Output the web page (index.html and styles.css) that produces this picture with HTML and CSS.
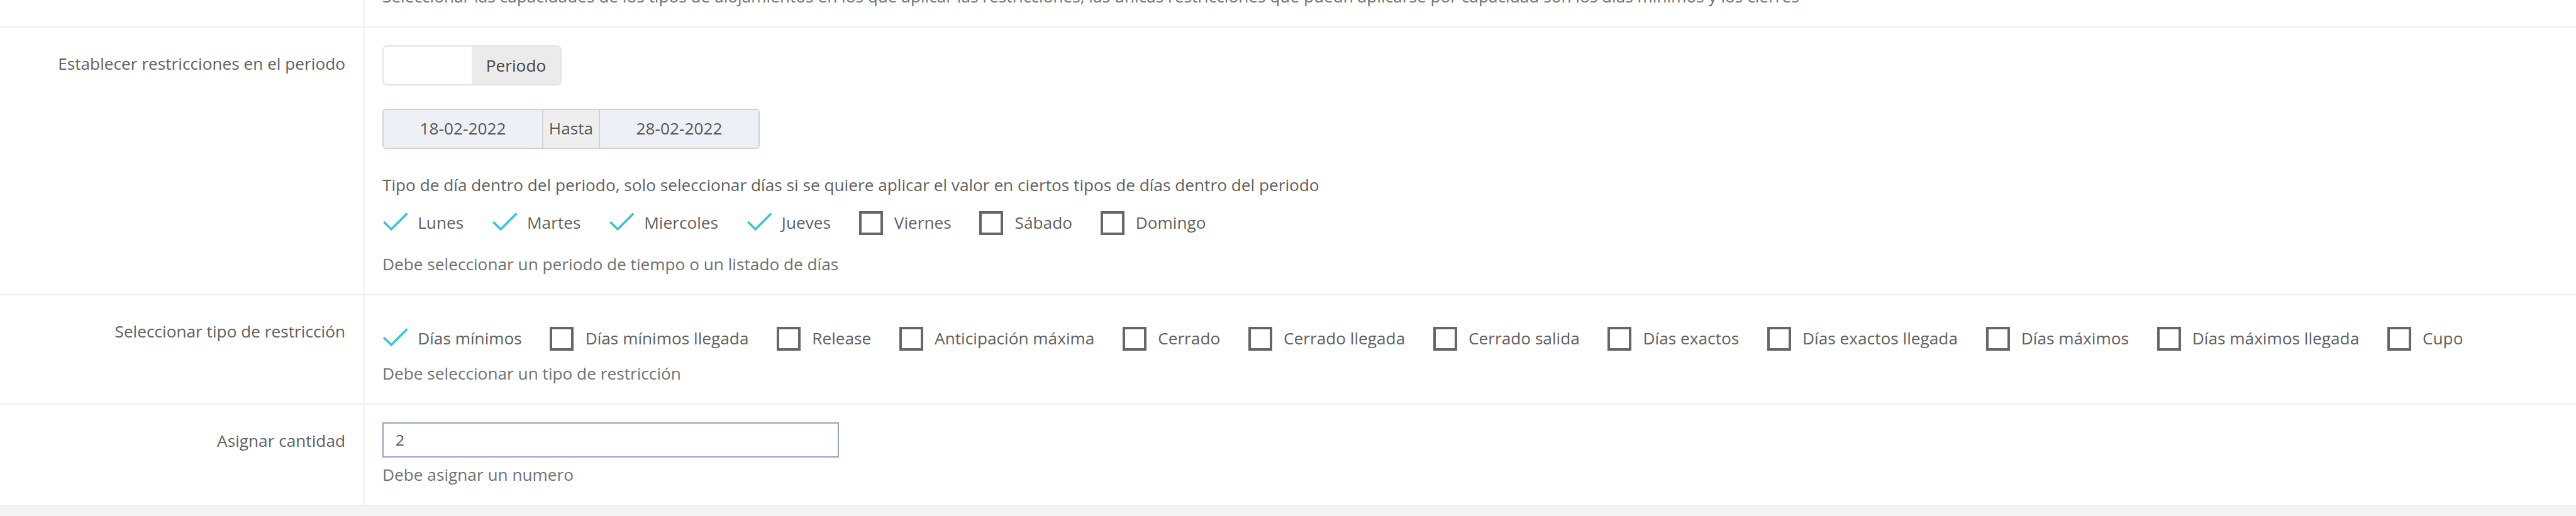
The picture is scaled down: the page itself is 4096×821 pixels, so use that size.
FILE: index.html
```html
<!DOCTYPE html>
<html lang="es">
<head>
    <meta charset="UTF-8">
    <meta name="viewport" content="width=device-width, initial-scale=1.0">
    <title>Restricciones</title>
    <link rel="stylesheet" href="styles.css">
</head>
<body>
    <form class="form-bordered">
        <!-- Capacidades -->
        <div class="form-row row-capacity">
            <div class="control-label"></div>
            <div class="control-body">
                <span class="help-block">Seleccionar las capacidades de los tipos de alojamientos en los que aplicar las restricciones, las únicas restricciones que puedn aplicarse por capacidad son los días mínimos y los cierres</span>
            </div>
        </div>

        <!-- Periodo -->
        <div class="form-row row-period">
            <div class="control-label">Establecer restricciones en el periodo</div>
            <div class="control-body">
                <div class="switch">
                    <span class="switch-handle"></span>
                    <span class="switch-label">Periodo</span>
                </div>
                <div class="date-range">
                    <input type="text" value="18-02-2022">
                    <span class="addon">Hasta</span>
                    <input type="text" value="28-02-2022">
                </div>
                <div class="text-line">Tipo de día dentro del periodo, solo seleccionar días si se quiere aplicar el valor en ciertos tipos de días dentro del periodo</div>
                <div class="checkbox-list" id="daysList"></div>
                <span class="help-block">Debe seleccionar un periodo de tiempo o un listado de días</span>
            </div>
        </div>

        <!-- Tipo de restricción -->
        <div class="form-row row-type">
            <div class="control-label">Seleccionar tipo de restricción</div>
            <div class="control-body">
                <div class="checkbox-list" id="typesList"></div>
                <span class="help-block">Debe seleccionar un tipo de restricción</span>
            </div>
        </div>

        <!-- Cantidad -->
        <div class="form-row row-amount">
            <div class="control-label">Asignar cantidad</div>
            <div class="control-body">
                <input type="text" class="amount" value="2">
                <span class="help-block">Debe asignar un numero</span>
            </div>
        </div>
    </form>

    <script>
        const days = ["Lunes", "Martes", "Miercoles", "Jueves", "Viernes", "Sábado", "Domingo"];
        const types = ["Días mínimos", "Días mínimos llegada", "Release", "Anticipación máxima", "Cerrado", "Cerrado llegada", "Cerrado salida", "Días exactos", "Días exactos llegada", "Días máximos", "Días máximos llegada", "Cupo"];

        function fillList(id, names, checkedCount) {
            document.getElementById(id).innerHTML = names.map((name, index) => {
                const mark = index < checkedCount
                    ? '<svg class="check" viewBox="0 0 42 38"><path d="M2.3 16.9 L14.2 28.8 L39.4 3.5"/></svg>'
                    : '<span class="box"></span>';
                return `<label class="checkbox"><span class="mark">${mark}</span>${name}</label>`;
            }).join("");
        }

        fillList("daysList", days, 4);
        fillList("typesList", types, 1);
    </script>
</body>
</html>
```
FILE: styles.css
```css
* {
    box-sizing: border-box;
}

body {
    font-family: 'Open Sans', sans-serif;
    font-size: 26.23px;
    line-height: 36px;
    background-color: #f4f4f4;
    margin: 0;
    color: #606060;
    height: 821px;
    overflow: hidden;
}

.form-bordered {
    background-color: #fff;
}

.form-row {
    display: flex;
    border-bottom: 2px solid #efefef;
}

.control-label {
    width: 578px;
    padding-top: 39px;
    padding-right: 29px;
    text-align: right;
}

.control-body {
    flex: 1;
    display: flex;
    flex-direction: column;
    align-items: flex-start;
    border-left: 2px solid #efefef;
    padding-left: 28px;
}

.help-block {
    color: #707070;
    white-space: nowrap;
}

.row-capacity {
    height: 44px;
}

.row-capacity .control-label {
    padding-top: 0;
}

.row-capacity .help-block {
    margin-top: -24px;
}

.row-period {
    height: 426px;
}

.row-period .control-body {
    padding-top: 28px;
}

.switch {
    display: flex;
    width: 285px;
    height: 64px;
    border: 2px solid #e4e4e4;
    border-radius: 8px;
    overflow: hidden;
}

.switch-handle {
    flex: 1;
}

.switch-label {
    width: 141px;
    background-color: #ebebeb;
    color: #444;
    text-align: center;
    line-height: 60px;
}

.date-range {
    display: flex;
    width: 600px;
    height: 64px;
    margin-top: 37px;
    border: 2px solid #d2d2d2;
    border-radius: 6px;
    overflow: hidden;
}

.date-range input {
    flex: 1;
    min-width: 0;
    border: none;
    outline: none;
    padding: 0 0 2px;
    background-color: #edf0f6;
    color: #555;
    font: inherit;
    text-align: center;
}

.date-range .addon {
    width: 92px;
    border-left: 2px solid #d2d2d2;
    border-right: 2px solid #d2d2d2;
    background-color: #eee;
    color: #555;
    line-height: 58px;
    text-align: center;
    text-shadow: 0 2px 0 #fff;
}

.text-line {
    margin-top: 39px;
}

.checkbox-list {
    display: flex;
    margin-top: 24px;
}

.checkbox {
    display: flex;
    align-items: flex-start;
    height: 38px;
    margin-right: 44.6px;
    white-space: nowrap;
}

.mark {
    display: flex;
    width: 56.2px;
    height: 38px;
}

.box {
    width: 38px;
    height: 38px;
    border: 4px solid #666;
}

.check {
    width: 42px;
    height: 38px;
    fill: none;
    stroke: #36c6d3;
    stroke-width: 3.6;
}

.row-period .help-block {
    margin-top: 28px;
}

.row-type {
    height: 174px;
}

.row-type .control-body {
    padding-top: 26px;
}

.row-type .help-block {
    margin-top: 18px;
}

.row-amount {
    height: 161px;
}

.row-amount .control-body {
    padding-top: 28px;
}

.amount {
    width: 726px;
    height: 56px;
    padding: 0 19px 2px;
    border: 2px solid #93a1bb;
    outline: none;
    font: inherit;
    font-size: 24.36px;
    color: #555;
}

.row-amount .help-block {
    margin-top: 9px;
}
```
